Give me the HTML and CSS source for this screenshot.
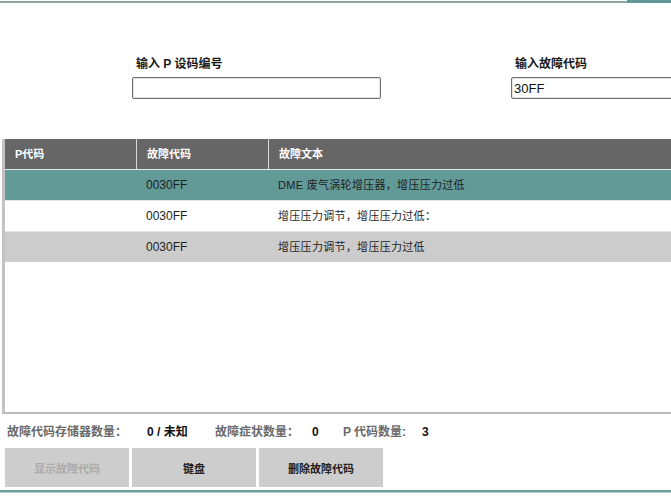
FILE: index.html
```html
<!DOCTYPE html>
<html lang="zh">
<head>
<meta charset="utf-8">
<title>故障代码</title>
<link rel="stylesheet" href="styles.css">
</head>
<body>
<div class="page">
  <div class="top"><div class="top-line"></div><div class="top-tab"></div></div>

  <div class="fields">
    <div class="field">
      <div class="label">输入 P 设码编号</div>
      <input class="input" type="text" value="">
    </div>
    <div class="field">
      <div class="label">输入故障代码</div>
      <input class="input" type="text" value="30FF">
    </div>
  </div>

  <div class="grid">
    <div class="row head">
      <div class="cell">P代码</div>
      <div class="cell sep">故障代码</div>
      <div class="cell sep">故障文本</div>
    </div>
    <div class="row sel">
      <div class="cell"></div>
      <div class="cell">0030FF</div>
      <div class="cell text">DME 废气涡轮增压器，增压压力过低</div>
    </div>
    <div class="row">
      <div class="cell"></div>
      <div class="cell">0030FF</div>
      <div class="cell text">增压压力调节，增压压力过低：</div>
    </div>
    <div class="row alt">
      <div class="cell"></div>
      <div class="cell">0030FF</div>
      <div class="cell text">增压压力调节，增压压力过低</div>
    </div>
  </div>

  <div class="status">
    <span class="s-label">故障代码存储器数量：</span>
    <span class="s-value">0 / 未知</span>
    <span class="s-label">故障症状数量：</span>
    <span class="s-value">0</span>
    <span class="s-label">P 代码数量:</span>
    <span class="s-value">3</span>
  </div>

  <div class="buttons">
    <button class="btn disabled">显示故障代码</button>
    <button class="btn">键盘</button>
    <button class="btn">删除故障代码</button>
  </div>

  <div class="bottom"></div>
</div>
</body>
</html>
```

FILE: styles.css
```css
html, body {
  margin: 0;
  padding: 0;
  background: #ffffff;
}
body {
  font-family: "Liberation Sans", "Noto Sans CJK SC", sans-serif;
  color: #222;
  overflow: hidden;
}
.page {
  width: 671px;
  height: 500px;
  overflow: hidden;
}
.top {
  display: flex;
  height: 3px;
}
.top-line {
  flex: 1;
  margin-top: 1px;
  background: #86a6a4;
}
.top-tab {
  width: 44px;
  background: #619795;
}
.fields {
  display: flex;
  gap: 130px;
  padding-left: 132px;
  margin-top: 54px;
}
.field {
  flex: none;
  width: 249px;
}
.label {
  font-size: 12px;
  font-weight: bold;
  line-height: 14px;
  padding-left: 4px;
  margin-bottom: 6px;
  color: #1a1a1a;
}
.input {
  display: block;
  box-sizing: border-box;
  width: 249px;
  height: 22px;
  margin: 0;
  border: 1px solid #707070;
  border-radius: 2px;
  box-shadow: inset 0 0 0 1px #e4e4e4;
  padding: 0 2px;
  font-family: "Liberation Sans", sans-serif;
  font-size: 13px;
  color: #111;
  background: #fff;
}
.grid {
  margin-top: 40px;
  margin-left: 2px;
  height: 273px;
  border-left: 3px solid #c2c2c2;
  border-bottom: 2px solid #bdbdbd;
}
.row {
  display: grid;
  grid-template-columns: 131px 132px 1fr;
  height: 30px;
  border-top: 1px solid #e6e6e6;
  font-size: 12px;
  line-height: 30px;
  color: #1e1e1e;
}
.row.head {
  border-top: none;
  background: #666666;
  color: #ffffff;
  font-weight: bold;
  font-size: 11px;
}
.row.sel {
  background: #629a98;
}
.row.alt {
  background: #cccccc;
}
.cell {
  padding-left: 10px;
  white-space: nowrap;
}
.cell.text {
  font-size: 11px;
  letter-spacing: 0.3px;
}
.cell.sep {
  border-left: 1px solid #d8d8d8;
}
.status {
  display: grid;
  grid-template-columns: 140px 68px 97px 31px 79px auto;
  margin-top: 8px;
  padding-left: 7px;
  height: 20px;
  line-height: 20px;
  font-size: 12px;
  font-weight: bold;
  white-space: nowrap;
}
.s-label {
  color: #6a6a6a;
}
.s-value {
  color: #111111;
}
.buttons {
  display: flex;
  gap: 3px;
  margin-top: 6px;
  padding-left: 5px;
}
.btn {
  width: 124px;
  height: 39px;
  margin: 0;
  border: none;
  background: #cdcdcd;
  font-family: "Liberation Sans", "Noto Sans CJK SC", sans-serif;
  font-size: 11px;
  font-weight: bold;
  color: #222;
}
.btn.disabled {
  color: #ababab;
}
.bottom {
  margin-top: 3px;
  height: 2px;
  background: #6b9f9d;
  border-bottom: 1px solid #b3cdcc;
}
```
